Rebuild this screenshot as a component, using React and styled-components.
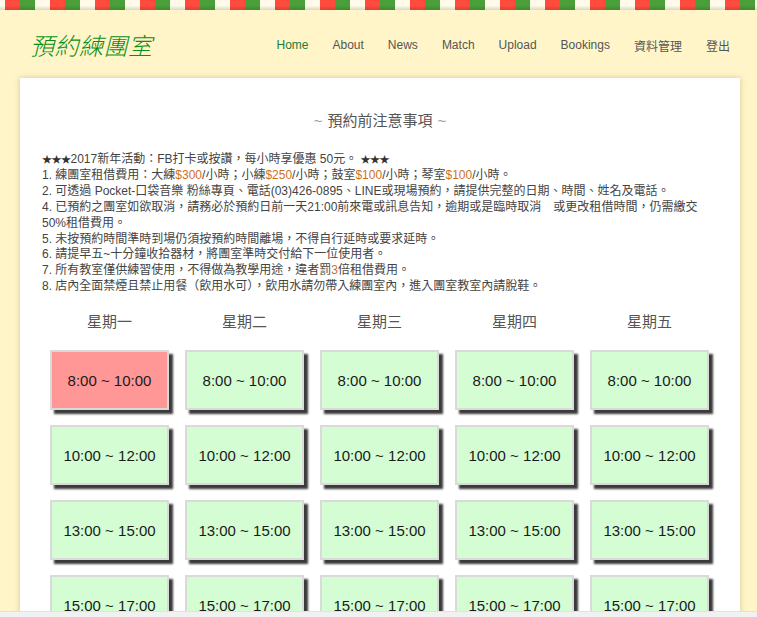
import React from "react";
import styled, { createGlobalStyle } from "styled-components";

const Global = createGlobalStyle`
  html, body { margin: 0; padding: 0; }
  body {
    background: #fff5c9;
    font-family: "Liberation Sans", Arial, "Noto Sans CJK TC", sans-serif;
    color: #444;
    overflow: hidden;
    height: 617px;
  }
`;

const Stripe = styled.div`
  height: 10px;
  background:
    linear-gradient(to bottom, rgba(0,0,0,0) 55%, rgba(0,0,0,0.14) 100%),
    repeating-linear-gradient(
      90deg,
      #fffbe8 0 5px,
      #ff4b3e 5px 20px,
      #4a9f3a 20px 35px,
      #fffbe8 35px 45px
    );
`;

const Header = styled.header`
  display: flex;
  align-items: center;
  justify-content: space-between;
  height: 68px;
  padding: 2px 15px 0 30px;
  box-sizing: border-box;
`;

const Logo = styled.div`
  font-family: "Noto Sans CJK TC", sans-serif;
  font-style: italic;
  font-size: 24px;
  font-weight: 300;
  color: #0b8f12;
  margin-top: -2px;
  letter-spacing: 0.5px;
`;

const Nav = styled.nav`
  display: flex;
  align-items: center;
`;

const NavLink = styled.a`
  font-size: 12px;
  padding: 0 12px;
  color: ${(p) => (p.$active ? "#1e7a3a" : "#555")};
  text-decoration: none;
  font-family: "Liberation Sans", Arial, "Noto Sans CJK TC", sans-serif;
`;

const Panel = styled.main`
  margin: 0 17px 0 20px;
  background: #fff;
  box-shadow: 0 0 6px rgba(140, 120, 40, 0.35);
  padding: 32px 22px 40px;
  min-height: 560px;
`;

const Title = styled.h2`
  margin: 0 0 21px;
  text-align: center;
  font-weight: normal;
  font-size: 15px;
  line-height: 20px;
  color: #555;
  font-family: "Noto Sans CJK TC", sans-serif;
`;

const Tilde = styled.span`
  color: #999;
  font-family: "Liberation Sans", Arial, sans-serif;
  margin: 0 5px;
`;

const Notes = styled.div`
  font-size: 12px;
  line-height: 15.9px;
  color: #444;
  font-family: "Liberation Sans", Arial, "Noto Sans CJK TC", sans-serif;
`;

const Price = styled.span`
  color: #d0701e;
`;

const Stars = styled.span`
  font-size: 10px;
  color: #333;
  letter-spacing: -0.5px;
`;

const Schedule = styled.div`
  display: grid;
  grid-template-columns: repeat(5, 119px);
  column-gap: 16px;
  row-gap: 15px;
  justify-content: center;
  margin-top: 16px;
  padding-right: 1px;
`;

const Day = styled.div`
  text-align: center;
  font-size: 15px;
  line-height: 20px;
  color: #555;
  font-family: "Noto Sans CJK TC", sans-serif;
  margin-bottom: 4px;
`;

const Slot = styled.button`
  height: 60px;
  box-sizing: border-box;
  border: 2px solid #dadada;
  background: ${(p) => (p.$booked ? "#ff9797" : "#d4fdd4")};
  box-shadow: 4px 4px 2px #3a3a3a;
  font-family: "Liberation Sans", Arial, sans-serif;
  font-size: 15px;
  color: #1a1a1a;
  padding: 0;
  cursor: pointer;
`;

const ScrollTrack = styled.div`
  position: fixed;
  left: 0;
  right: 0;
  bottom: 0;
  height: 5px;
  background: #f1f1f1;
  border-top: 1px solid #e2e2e2;
`;

const days = ["星期一", "星期二", "星期三", "星期四", "星期五"];
const times = ["8:00 ~ 10:00", "10:00 ~ 12:00", "13:00 ~ 15:00", "15:00 ~ 17:00"];
const navItems = ["Home", "About", "News", "Match", "Upload", "Bookings", "資料管理", "登出"];

export default function App() {
  return (
    <>
      <Global />
      <Stripe />
      <Header>
        <Logo>預約練團室</Logo>
        <Nav>
          {navItems.map((n, i) => (
            <NavLink key={n} href="#" $active={i === 0}>
              {n}
            </NavLink>
          ))}
        </Nav>
      </Header>
      <Panel>
        <Title>
          <Tilde>~</Tilde>預約前注意事項<Tilde>~</Tilde>
        </Title>
        <Notes>
          <div>
            <Stars>★★★</Stars>2017新年活動：FB打卡或按讚，每小時享優惠 50元。 <Stars>★★★</Stars>
          </div>
          <div>
            1. 練團室租借費用：大練<Price>$300</Price>/小時；小練<Price>$250</Price>/小時；鼓室
            <Price>$100</Price>/小時；琴室<Price>$100</Price>/小時。
          </div>
          <div>2. 可透過 Pocket-口袋音樂 粉絲專頁、電話(03)426-0895、LINE或現場預約，請提供完整的日期、時間、姓名及電話。</div>
          <div>
            4. 已預約之團室如欲取消，請務必於預約日前一天21:00前來電或訊息告知，逾期或是臨時取消　或更改租借時間，仍需繳交50%租借費用。
          </div>
          <div>5. 未按預約時間準時到場仍須按預約時間離場，不得自行延時或要求延時。</div>
          <div>6. 請提早五~十分鐘收拾器材，將團室準時交付給下一位使用者。</div>
          <div>
            7. 所有教室僅供練習使用，不得做為教學用途，違者罰<Price>3</Price>倍租借費用。
          </div>
          <div>8. 店內全面禁煙且禁止用餐（飲用水可），飲用水請勿帶入練團室內，進入團室教室內請脫鞋。</div>
        </Notes>
        <Schedule>
          {days.map((d) => (
            <Day key={d}>{d}</Day>
          ))}
          {times.map((t, r) =>
            days.map((d, c) => (
              <Slot key={d + t} $booked={r === 0 && c === 0}>
                {t}
              </Slot>
            ))
          )}
        </Schedule>
      </Panel>
      <ScrollTrack />
    </>
  );
}
